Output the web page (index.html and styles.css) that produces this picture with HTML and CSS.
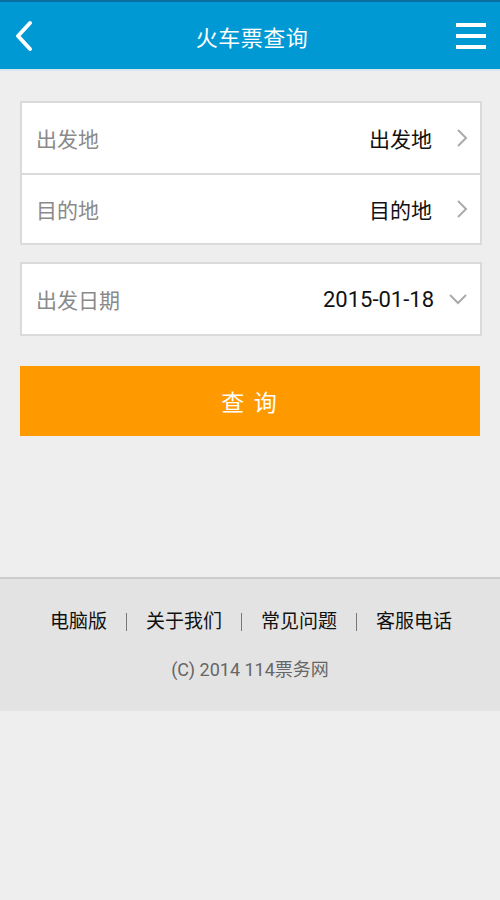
FILE: index.html
```html
<!DOCTYPE html>
<html lang="zh-CN">
<head>
  <meta charset="UTF-8" />
  <meta name="viewport" content="width=device-width, initial-scale=1.0"/>
  <title>火车票查询</title>
  <link rel="stylesheet" href="styles.css">
</head>
<body>
  <!-- Header -->
  <header class="topbar">
    <a class="topbar-back" href="#">
      <svg width="20" height="32" viewBox="0 0 20 32"><path d="M16 3 L4 16 L16 29" fill="none" stroke="#fff" stroke-width="4" stroke-linecap="round" stroke-linejoin="round"/></svg>
    </a>
    <h1>火车票查询</h1>
    <a class="topbar-menu" href="#">
      <span></span><span></span><span></span>
    </a>
  </header>

  <main class="content">
    <div class="form-group">
      <div class="form-row">
        <span class="label">出发地</span>
        <span class="value">出发地</span>
        <svg class="arrow" width="12" height="20" viewBox="0 0 12 20"><path d="M2 2 L10 10 L2 18" fill="none" stroke="#aaa" stroke-width="2"/></svg>
      </div>
      <div class="form-row">
        <span class="label">目的地</span>
        <span class="value">目的地</span>
        <svg class="arrow" width="12" height="20" viewBox="0 0 12 20"><path d="M2 2 L10 10 L2 18" fill="none" stroke="#aaa" stroke-width="2"/></svg>
      </div>
    </div>

    <div class="form-group">
      <div class="form-row">
        <span class="label">出发日期</span>
        <span class="value date">2015-01-18</span>
        <svg class="arrow arrow-down" width="20" height="12" viewBox="0 0 20 12"><path d="M2 2 L10 10 L18 2" fill="none" stroke="#aaa" stroke-width="2"/></svg>
      </div>
    </div>

    <button class="btn-search">查 询</button>
  </main>

  <footer class="footer">
    <nav class="footer-links">
      <a href="#">电脑版</a>
      <span class="sep"></span>
      <a href="#">关于我们</a>
      <span class="sep"></span>
      <a href="#">常见问题</a>
      <span class="sep"></span>
      <a href="#">客服电话</a>
    </nav>
    <p class="copyright">(C) 2014 114票务网</p>
  </footer>
</body>
</html>
```

FILE: styles.css
```css
* {
  box-sizing: border-box;
  margin: 0;
  padding: 0;
}

body {
  font-family: Roboto, "Noto Sans CJK SC", sans-serif;
  background-color: #eeeeee;
  width: 500px;
  min-height: 900px;
}

/* Header */
.topbar {
  height: 71px;
  background-color: #0099d3;
  border-top: 2px solid #0a6f9f;
  border-bottom: 2px solid #d8e8f0;
  display: flex;
  align-items: center;
  justify-content: space-between;
  padding: 0 14px;
  color: #fff;
}

.topbar h1 {
  font-size: 22px;
  font-weight: 400;
  flex: 1;
  text-align: center;
  letter-spacing: 0.5px;
  padding-left: 4px;
}

.topbar-back {
  display: flex;
  width: 30px;
}

.topbar-menu {
  display: flex;
  flex-direction: column;
  gap: 7px;
  width: 30px;
}

.topbar-menu span {
  display: block;
  height: 4px;
  background: #fff;
}

/* Form */
.content {
  padding: 30px 18px 0 20px;
  height: 506px;
}

.form-group {
  background: #fff;
  border: 2px solid #dadada;
  margin-bottom: 17px;
}

.form-row {
  height: 70px;
  display: flex;
  align-items: center;
  padding: 0 12px 0 14px;
  font-size: 21px;
}

.form-row + .form-row {
  border-top: 2px solid #dadada;
}

.label {
  flex: 1;
  color: #8a8a8a;
}

.value {
  color: #111;
}

.value.date {
  font-size: 22px;
}

.arrow {
  margin-left: 24px;
}

.arrow-down {
  margin-left: 14px;
}

.btn-search {
  display: block;
  width: 460px;
  height: 70px;
  margin-top: 30px;
  background: #ff9900;
  border: none;
  color: #fff;
  font-family: inherit;
  font-size: 23px;
  letter-spacing: 2px;
}

/* Footer */
.footer {
  background: #e3e3e3;
  border-top: 2px solid #cccccc;
  height: 134px;
  text-align: center;
  padding-top: 27px;
}

.footer-links {
  display: flex;
  justify-content: center;
  align-items: center;
  gap: 19px;
  font-size: 19px;
  padding-left: 2px;
}

.footer-links a {
  color: #111;
  text-decoration: none;
}

.footer-links .sep {
  display: block;
  width: 1px;
  height: 18px;
  margin-top: 4px;
  background: #777;
}

.copyright {
  margin-top: 22px;
  color: #666;
  font-size: 18px;
}
```
